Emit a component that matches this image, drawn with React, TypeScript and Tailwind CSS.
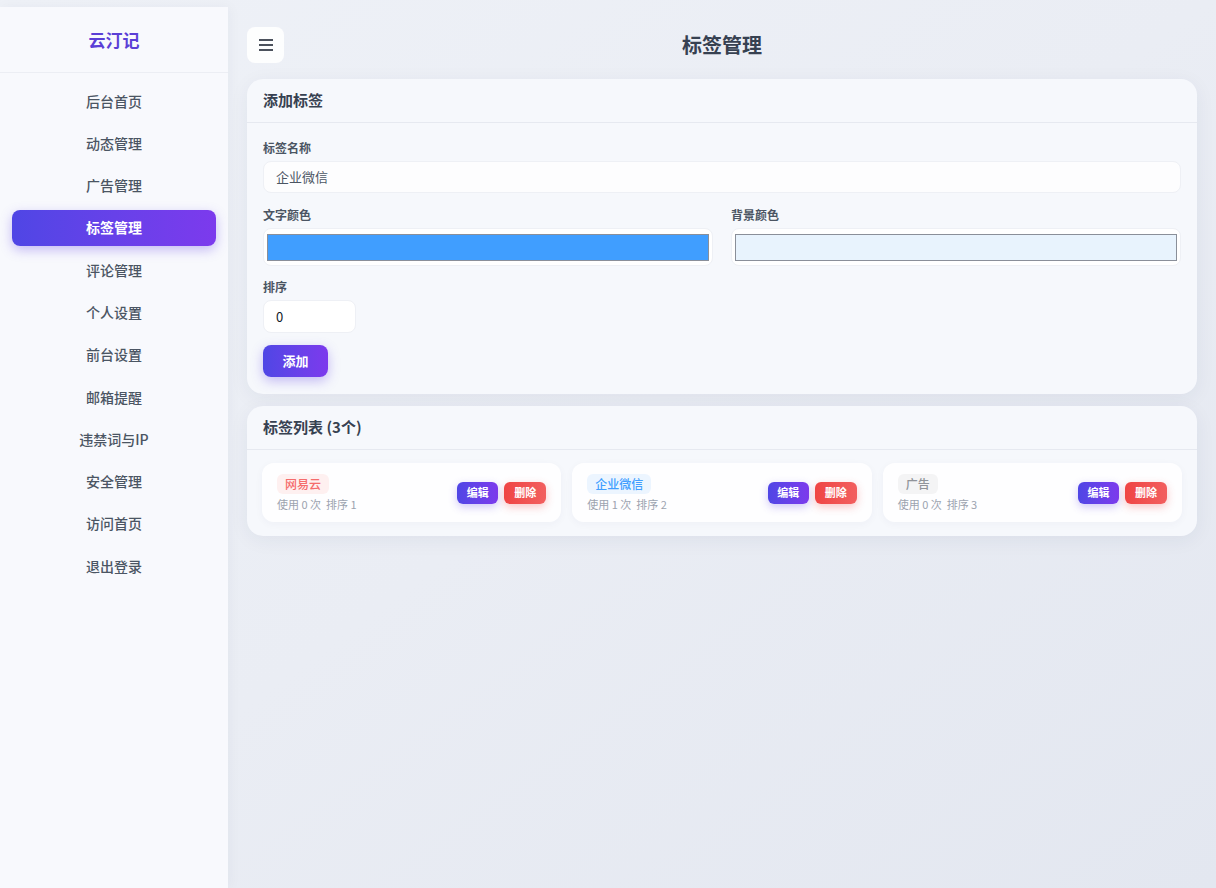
import React from 'react'

const font = { fontFamily: '"Noto Sans CJK SC", "Noto Sans", Inter, sans-serif' }

const navItems = [
  '后台首页',
  '动态管理',
  '广告管理',
  '标签管理',
  '评论管理',
  '个人设置',
  '前台设置',
  '邮箱提醒',
  '违禁词与IP',
  '安全管理',
  '访问首页',
  '退出登录',
]

const tags = [
  { name: '网易云', color: 'text-[#f56c6c]', bg: 'bg-[#fef0f0]', used: 0, order: 1 },
  { name: '企业微信', color: 'text-[#409eff]', bg: 'bg-[#ecf5ff]', used: 1, order: 2 },
  { name: '广告', color: 'text-[#909399]', bg: 'bg-[#f4f4f5]', used: 0, order: 3 },
]

function Sidebar() {
  return (
    <aside className="mt-[7px] w-[228px] shrink-0 bg-[#f8f9fd] shadow-[2px_0_12px_rgba(30,40,80,0.04)]">
      <div className="flex h-[66px] items-center justify-center border-b border-[#eceef4] text-[17px] font-bold text-[#5b3fd6]">
        云汀记
      </div>
      <nav className="flex flex-col gap-[6.3px] px-3 pt-[10px]">
        {navItems.map((item) => {
          const active = item === '标签管理'
          return (
            <a
              key={item}
              className={
                active
                  ? 'flex h-9 items-center justify-center rounded-lg bg-gradient-to-r from-[#4f46e5] to-[#7c3aed] text-[14px] font-semibold text-white shadow-[0_4px_12px_rgba(99,70,230,0.35)]'
                  : 'flex h-9 items-center justify-center rounded-lg text-[14px] font-medium text-[#4b5563]'
              }
            >
              {item}
            </a>
          )
        })}
      </nav>
    </aside>
  )
}

function Label({ children }: { children: React.ReactNode }) {
  return <div className="mb-[5px] text-[12px] font-semibold leading-[17px] text-[#4b5563]">{children}</div>
}

function ColorField({ swatch }: { swatch: string }) {
  return (
    <div className="flex h-[38px] items-center rounded-lg border border-[#eef0f5] bg-white px-[3px]">
      <div className={`h-[27px] w-full border border-[#8a8f99] ${swatch}`} />
    </div>
  )
}

function AddTagCard() {
  return (
    <section className="rounded-2xl bg-[#f6f8fc] shadow-[0_4px_20px_rgba(40,50,90,0.06)]">
      <div className="flex h-[44px] items-center border-b border-[#e6e9f0] px-4 text-[15px] font-semibold text-[#374151]">
        添加标签
      </div>
      <div className="px-4 pb-[17px] pt-4">
        <Label>标签名称</Label>
        <div className="flex h-8 items-center rounded-lg border border-[#eef0f5] bg-[#fdfdfe] px-3 text-[13px] text-[#4b5563]">
          企业微信
        </div>
        <div className="mt-[13px] grid grid-cols-2 gap-[18px]">
          <div>
            <Label>文字颜色</Label>
            <ColorField swatch="bg-[#409eff]" />
          </div>
          <div>
            <Label>背景颜色</Label>
            <ColorField swatch="bg-[#e8f3fd]" />
          </div>
        </div>
        <div className="mt-3">
          <Label>排序</Label>
          <div className="flex h-[33px] w-[93px] items-center rounded-lg border border-[#eef0f5] bg-white px-3 text-[13px] text-[#111827]">
            0
          </div>
        </div>
        <button className="mt-3 h-8 w-[65px] rounded-lg bg-gradient-to-r from-[#4f46e5] to-[#7c3aed] text-[13px] font-semibold text-white shadow-[0_4px_12px_rgba(99,70,230,0.35)]">
          添加
        </button>
      </div>
    </section>
  )
}

function TagList() {
  return (
    <section className="mt-3 rounded-2xl bg-[#f6f8fc] shadow-[0_4px_20px_rgba(40,50,90,0.06)]">
      <div className="flex h-[44px] items-center border-b border-[#e6e9f0] px-4 text-[15px] font-semibold text-[#374151]">
        标签列表 (3个)
      </div>
      <div className="grid grid-cols-3 gap-[11px] px-[15px] pb-[14px] pt-[13px]">
        {tags.map((t) => (
          <div
            key={t.name}
            className="flex h-[59px] items-center justify-between rounded-xl bg-white/90 px-[15px] shadow-[0_2px_8px_rgba(40,50,90,0.04)]"
          >
            <div className="flex flex-col items-start">
              <span className={`rounded-md px-2 text-[12px] font-medium leading-5 ${t.color} ${t.bg}`}>{t.name}</span>
              <span className="mt-[2px] text-[11px] leading-4 text-[#9ca3af]">
                使用 {t.used} 次&nbsp;&nbsp;排序 {t.order}
              </span>
            </div>
            <div className="flex gap-[6px]">
              <button className="h-[22px] w-[41px] rounded-md bg-gradient-to-r from-[#4f46e5] to-[#7c3aed] text-[11px] font-bold text-white shadow-[0_3px_8px_rgba(99,70,230,0.3)]">
                编辑
              </button>
              <button className="h-[22px] w-[42px] rounded-md bg-gradient-to-r from-[#ef4444] to-[#f25f5f] text-[11px] font-bold text-white shadow-[0_3px_8px_rgba(239,68,68,0.3)]">
                删除
              </button>
            </div>
          </div>
        ))}
      </div>
    </section>
  )
}

export default function App() {
  return (
    <div style={font} className="flex min-h-[888px] bg-gradient-to-br from-[#eef1f7] via-[#eaedf4] to-[#e3e7f0]">
      <Sidebar />
      <main className="flex-1 px-[19px] pt-[27px]">
        <div className="relative mb-4 flex h-9 items-center justify-center">
          <button className="absolute left-0 top-0 flex h-9 w-[37px] items-center justify-center rounded-lg bg-white/90 text-[#111827]">
            <svg width="16" height="14" viewBox="0 0 16 14" fill="none" stroke="currentColor" strokeWidth="1.4">
              <path d="M1 2h14M1 7h14M1 12h14" />
            </svg>
          </button>
          <h1 className="text-[20px] font-bold text-[#374151]">标签管理</h1>
        </div>
        <AddTagCard />
        <TagList />
      </main>
    </div>
  )
}
